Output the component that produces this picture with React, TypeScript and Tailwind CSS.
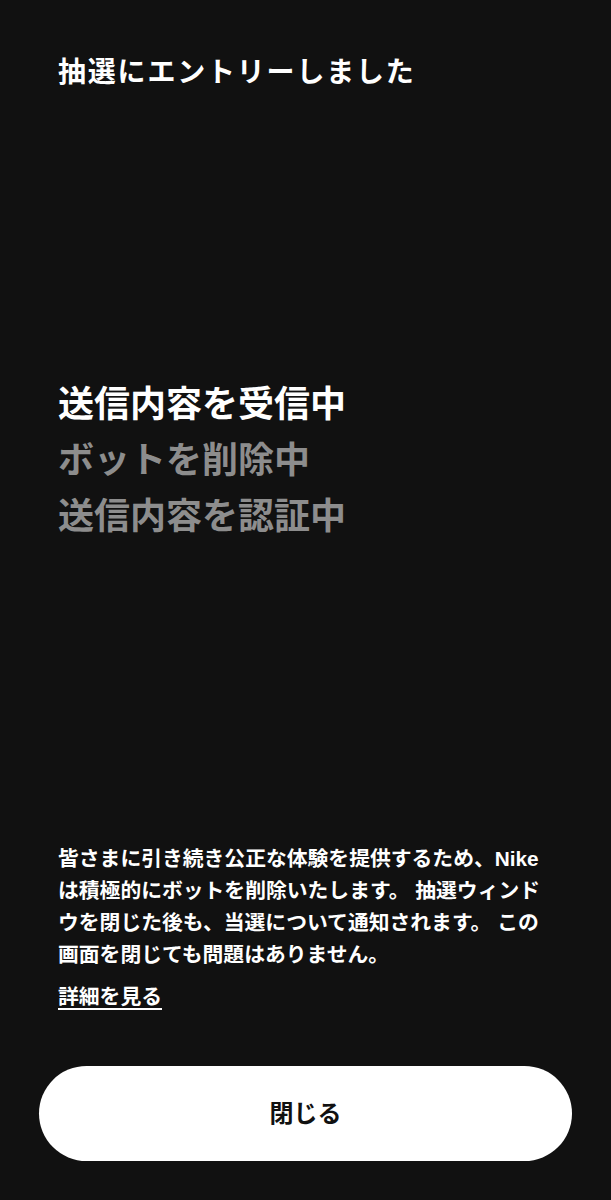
export default function App() {
    return (
        <div
            className="flex h-[1200px] w-full flex-col bg-[#111111] text-white"
            style={{ fontFamily: '"Liberation Sans", "Noto Sans CJK JP", sans-serif' }}
        >
            {/* Header */}
            <h1 className="whitespace-nowrap px-[58px] pt-[53px] text-[28px] font-bold leading-[39px] tracking-[1.8px]">
                抽選にエントリーしました
            </h1>

            {/* Status steps */}
            <div className="mt-[285px] px-[58px] text-[36px] font-bold leading-[56px]">
                <p className="text-white">送信内容を受信中</p>
                <p className="text-[#8d8d8d]">ボットを削除中</p>
                <p className="text-[#8d8d8d]">送信内容を認証中</p>
            </div>

            {/* Notice */}
            <div className="mt-auto px-[58px]">
                <p className="text-[20.8px] font-bold leading-[32px]">
                    <span className="block whitespace-nowrap">皆さまに引き続き公正な体験を提供するため、Nike</span>
                    <span className="block whitespace-nowrap">は積極的にボットを削除いたします。 抽選ウィンド</span>
                    <span className="block whitespace-nowrap">ウを閉じた後も、当選について通知されます。 この</span>
                    <span className="block whitespace-nowrap">画面を閉じても問題はありません。</span>
                </p>
                <a href="#" className="mt-[10px] inline-block text-[20.8px] font-bold leading-[32px] underline underline-offset-[4px]">
                    詳細を見る
                </a>
            </div>

            {/* Close button */}
            <div className="mt-[53px] px-[39px] pb-[39px]">
                <button className="flex h-[95px] w-full items-center justify-center rounded-full bg-white text-[24px] font-bold text-[#111111]">
                    閉じる
                </button>
            </div>
        </div>
    )
}
